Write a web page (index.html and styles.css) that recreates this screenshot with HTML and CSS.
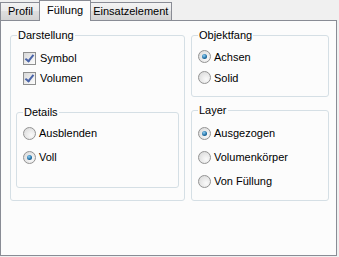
FILE: index.html
```html
<!DOCTYPE html>
<html lang="de">
<head>
<meta charset="UTF-8" />
<title>Füllung</title>
<link rel="stylesheet" href="styles.css">
</head>
<body>
<div class="tabs">
    <div class="tab first">Profil</div>
    <div class="tab active">Füllung</div>
    <div class="tab last">Einsatzelement</div>
</div>
<div class="page">
    <!-- Left: Darstellung with nested Details group -->
    <fieldset class="group main">
        <legend>Darstellung</legend>
        <div class="opts checks">
            <label class="opt"><span class="check on"></span>Symbol</label>
            <label class="opt"><span class="check on"></span>Volumen</label>
        </div>
        <fieldset class="group details">
            <legend>Details</legend>
            <div class="opts">
                <label class="opt"><span class="radio"></span>Ausblenden</label>
                <label class="opt"><span class="radio on"></span>Voll</label>
            </div>
        </fieldset>
    </fieldset>

    <!-- Right column -->
    <div class="side">
        <fieldset class="group snap">
            <legend>Objektfang</legend>
            <div class="opts tight">
                <label class="opt"><span class="radio on"></span>Achsen</label>
                <label class="opt"><span class="radio"></span>Solid</label>
            </div>
        </fieldset>
        <fieldset class="group layer">
            <legend>Layer</legend>
            <div class="opts">
                <label class="opt"><span class="radio on"></span>Ausgezogen</label>
                <label class="opt"><span class="radio"></span>Volumenkörper</label>
                <label class="opt"><span class="radio"></span>Von Füllung</label>
            </div>
        </fieldset>
    </div>
</div>
</body>
</html>
```
FILE: styles.css
```css
body {
margin: 0;
background: #f0f0f0;
font-family: "Liberation Sans", Arial, sans-serif;
font-size: 11px;
color: #000;
}
.tabs {
display: flex;
align-items: flex-end;
height: 20px;
}
.tab {
height: 17px;
line-height: 17px;
padding: 0 5px;
border: 1px solid #898c95;
border-bottom: none;
margin-left: -1px;
background: linear-gradient(#f3f3f3, #ebebeb 45%, #dedede 50%, #d3d3d3);
}
.tab.first {
margin-left: 0;
padding: 0 7px;
}
.tab.last {
padding: 0 3px;
}
.tab.active {
height: 20px;
line-height: 18px;
padding: 0 7px;
margin: 0 -1px -1px -2px;
background: #fcfcfc;
position: relative;
z-index: 1;
}
.page {
height: 234px;
width: 326px;
padding-left: 9px;
border: 1px solid #898c95;
background: #fcfcfc;
display: grid;
grid-template-columns: 175px 138px;
column-gap: 6px;
}
.group {
margin: 0;
padding: 0;
border: 1px solid #d5dfe5;
border-radius: 3px;
min-width: 0;
}
.group legend {
padding: 0 1px;
margin-left: 6px;
line-height: 13px;
}
.main {
margin-top: 8px;
height: 170px;
display: flex;
flex-direction: column;
}
.side {
margin-top: 8px;
display: flex;
flex-direction: column;
}
.snap {
height: 66px;
}
.layer {
margin-top: 7px;
height: 95px;
}
.details {
margin: 18px 5px 0 5px;
height: 80px;
}
.opts {
display: flex;
flex-direction: column;
padding: 2px 0 0 6px;
}
.layer .opts {
padding-top: 4px;
}
.opt {
display: flex;
align-items: center;
height: 24px;
gap: 3px;
}
.checks {
padding: 6px 0 0 12px;
}
.checks .opt {
height: 20px;
gap: 4px;
}
.tight {
padding-top: 4px;
}
.tight .opt {
height: 21px;
}
.check {
width: 11px;
height: 11px;
border: 1px solid #8e8f8f;
background: linear-gradient(135deg, #d8d8d8, #fdfdfd);
position: relative;
}
.check.on::after {
content: "";
position: absolute;
left: 3px;
top: 0px;
width: 3px;
height: 7px;
border: solid #4a64a8;
border-width: 0 2px 2px 0;
transform: rotate(38deg);
}
.radio {
width: 11px;
height: 11px;
border: 1px solid #939393;
border-radius: 50%;
background: radial-gradient(circle at 65% 65%, #fafafa, #d6d6d6);
display: flex;
align-items: center;
justify-content: center;
}
.radio.on::after {
content: "";
width: 5px;
height: 5px;
border-radius: 50%;
background: radial-gradient(circle at 40% 35%, #8fd0f6, #1b6a9f 60%, #0d3e6c);
}
```
